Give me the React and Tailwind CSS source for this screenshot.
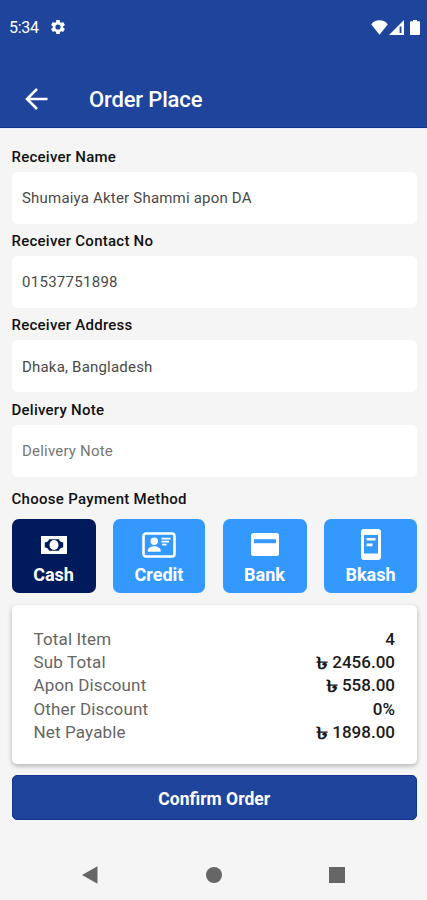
const fields = [
  { label: "Receiver Name", value: "Shumaiya Akter Shammi apon DA", tone: "text-[#4a4a4a]", spacing: "tracking-[0.2px]" },
  { label: "Receiver Contact No", value: "01537751898", tone: "text-[#4a4a4a]", spacing: "tracking-[0.28px]" },
  { label: "Receiver Address", value: "Dhaka, Bangladesh", tone: "text-[#4a4a4a]", spacing: "tracking-[0.2px]" },
  { label: "Delivery Note", value: "Delivery Note", tone: "text-[#777777]", spacing: "tracking-[0.2px]" },
];

const totals = [
  { label: "Total Item", value: "4" },
  { label: "Sub Total", value: "2456.00", money: true },
  { label: "Apon Discount", value: "558.00", money: true },
  { label: "Other Discount", value: "0%" },
  { label: "Net Payable", value: "1898.00", money: true },
];

function CashIcon() {
  return (
    <svg width="26" height="18" viewBox="0 0 26 18">
      <path fill="#fff" d="M0 0h26v18H0z" />
      <path fill="#001a5c" d="M8 3.300h10c.3 1.600 1.800 3 4.200 3.200v5c-2.400.2-3.900 1.600-4.200 3.200H8c-.3-1.600-1.800-3-4.200-3.200v-5C6.200 6.300 7.700 4.900 8 3.300z" />
      <ellipse cx="13" cy="9" rx="4.500" ry="4.900" fill="#fff" />
    </svg>
  );
}

function CreditIcon() {
  return (
    <svg width="34" height="26" viewBox="0 0 34 26" fill="none">
      <rect x="1.500" y="1.500" width="31" height="23" rx="2.500" stroke="#fff" strokeWidth="2.600" />
      <circle cx="12.200" cy="9.200" r="3.700" fill="#fff" />
      <path fill="#fff" d="M5.800 19.700v-1.500c0-2.300 3.300-4 6.400-4s6.400 1.700 6.400 4v1.500z" />
      <path stroke="#fff" strokeWidth="1.800" d="M19.500 6.700H28.500M19.500 9.700h7.500M20 12.700h4.500" />
    </svg>
  );
}

function BankIcon() {
  return (
    <svg width="28" height="23" viewBox="0 0 28 23">
      <rect width="28" height="23" rx="2.500" fill="#fff" />
      <path fill="#3399ff" d="M3 6.200h22v4H3z" />
    </svg>
  );
}

function BkashIcon() {
  return (
    <svg width="20" height="31" viewBox="0 0 20 31">
      <rect width="20" height="31" rx="3" fill="#fff" />
      <path fill="#3399ff" d="M3 6h14v18.500H3z" />
      <path fill="#fff" d="M5.500 9h9v2.600h-9zM5.500 14.600h6v2.600h-6z" />
    </svg>
  );
}

const methods = [
  { name: "Cash", Icon: CashIcon, box: "w-[84px] bg-[#001a5c]" },
  { name: "Credit", Icon: CreditIcon, box: "w-[92px] bg-[#3399ff]" },
  { name: "Bank", Icon: BankIcon, box: "w-[84px] bg-[#3399ff]" },
  { name: "Bkash", Icon: BkashIcon, box: "w-[93px] bg-[#3399ff]" },
];

function StatusBar() {
  return (
    <div className="flex h-[54px] items-center pl-[9px] pr-[7px] text-white">
      <span className="pt-[2px] text-[16px] leading-[20px] tracking-[-0.3px]">5:34</span>
      <svg className="ml-[11px]" width="16" height="16" viewBox="1 1 22 22" fill="#fff">
        <path d="M19.140 12.940c.04-.3.060-.61.060-.94s-.02-.64-.07-.94l2.030-1.580a.49.490 0 0 0 .12-.61l-1.920-3.320a.488.488 0 0 0-.59-.22l-2.390.96c-.5-.38-1.030-.7-1.620-.94l-.36-2.540a.484.484 0 0 0-.48-.41h-3.840c-.24 0-.43.17-.47.41l-.36 2.540c-.59.24-1.130.57-1.620.94l-2.390-.96a.48.48 0 0 0-.59.22L2.740 8.870c-.12.21-.08.470.12.610l2.030 1.580c-.05.3-.09.630-.09.940s.02.640.070.940l-2.030 1.580a.49.490 0 0 0-.12.610l1.920 3.320c.12.220.37.290.59.220l2.390-.96c.5.380 1.030.7 1.620.94l.36 2.540c.05.240.24.410.48.410h3.840c.24 0 .44-.17.47-.41l.36-2.540c.59-.24 1.130-.56 1.620-.94l2.390.96c.22.080.47 0 .59-.22l1.920-3.320a.49.490 0 0 0-.12-.61zM12 15.600A3.600 3.600 0 1 1 12 8.400a3.600 3.600 0 0 1 0 7.200z" />
      </svg>
      <div className="ml-auto flex items-center gap-[1px]">
        <svg width="17" height="15" viewBox="0 0 17 15" fill="#fff">
          <path d="M8.500 14.800.3 4.500C2 1.600 5 .3 8.500.3s6.500 1.300 8.200 4.200z" />
        </svg>
        <svg width="15" height="15" viewBox="0 0 15 15">
          <path fill="#fff" d="M0 15 15 0v15z" />
          <path fill="#1f449c" d="M10.600 6.500h1.900V13h-1.900z" />
        </svg>
        <svg className="ml-[5px]" width="10" height="15" viewBox="0 0 10 15" fill="#fff">
          <path d="M3 0h4v1.200h2a1 1 0 0 1 1 1V14a1 1 0 0 1-1 1H1a1 1 0 0 1-1-1V2.200a1 1 0 0 1 1-1h2z" />
        </svg>
      </div>
    </div>
  );
}

export default function App() {
  return (
    <div className="flex h-[900px] w-[427px] flex-col overflow-hidden bg-[#f5f5f5] font-['Roboto',sans-serif]">
      <header className="h-[128px] shrink-0 border-b border-[#12348f] bg-[#1f449c] shadow-[0_1px_0_#e6ebf8]">
        <StatusBar />
        <div className="mt-[17px] flex h-[56px] items-center pl-[25px] text-white">
          <svg width="23" height="22" viewBox="0 0 23 22" fill="none" stroke="#fff" strokeWidth="2.600">
            <path d="M22.500 11H2.500M12 1 2 11l10 10" />
          </svg>
          <h1 className="ml-[41px] pt-[2px] text-[22px] font-medium leading-[28px] tracking-[-0.15px]">Order Place</h1>
        </div>
      </header>

      <main className="flex flex-col pl-[11.500px] pr-[10px] pt-[12px]">
        {fields.map((f) => (
          <div key={f.label} className="flex h-[84.200px] flex-col">
            <label className="h-[32px] text-[15px] font-medium leading-[35px] tracking-[0.25px] text-[#111111]">{f.label}</label>
            <div className={"flex h-[52px] items-center rounded-[5px] bg-white pl-[10.500px] pt-[1px] text-[15px] " + f.tone + " " + f.spacing}>
              {f.value}
            </div>
          </div>
        ))}

        <h2 className="mt-[3px] h-[31px] text-[15px] font-medium leading-[38px] tracking-[0.3px] text-[#111111]">
          Choose Payment Method
        </h2>

        <div className="mt-[8px] flex h-[74px] justify-between">
          {methods.map(({ name, Icon, box }) => (
            <div key={name} className={"flex flex-col items-center rounded-[7px] text-white " + box}>
              <div className="flex h-[52px] items-center justify-center">
                <Icon />
              </div>
              <span className="-mt-[7px] text-[18px] font-bold leading-[22px]">{name}</span>
            </div>
          ))}
        </div>

        <section className="mt-[12px] flex h-[159px] flex-col rounded-[5px] bg-white px-[22px] pt-[23px] shadow-[0_2px_5px_rgba(0,0,0,0.28)]">
          {totals.map((t) => (
            <div key={t.label} className="flex h-[23.300px] items-center justify-between text-[17px] leading-[23px]">
              <span className="tracking-[0.15px] text-[#666666]">{t.label}</span>
              <span className="flex items-center font-medium text-[#1a1a1a]">
                {t.money && (
                  <span className="mr-[4px] inline-block origin-right scale-x-[1.45] text-[17px] font-bold leading-[20px]">৳</span>
                )}
                {t.value}
              </span>
            </div>
          ))}
        </section>

        <button className="mt-[11px] h-[45px] rounded-[5px] border border-[#12348f] bg-[#1f449c] pt-[3px] text-[17.500px] font-bold text-white">
          Confirm Order
        </button>
      </main>

      <nav className="mt-[46px] flex items-center pl-[82px]">
        <svg width="16" height="18" viewBox="0 0 16 18" fill="#666">
          <path d="M0 9 15.500.3v17.400z" />
        </svg>
        <div className="ml-[108px] h-[16px] w-[16px] rounded-full bg-[#666666]" />
        <div className="ml-[107px] h-[16px] w-[16px] bg-[#666666]" />
      </nav>
    </div>
  );
}
